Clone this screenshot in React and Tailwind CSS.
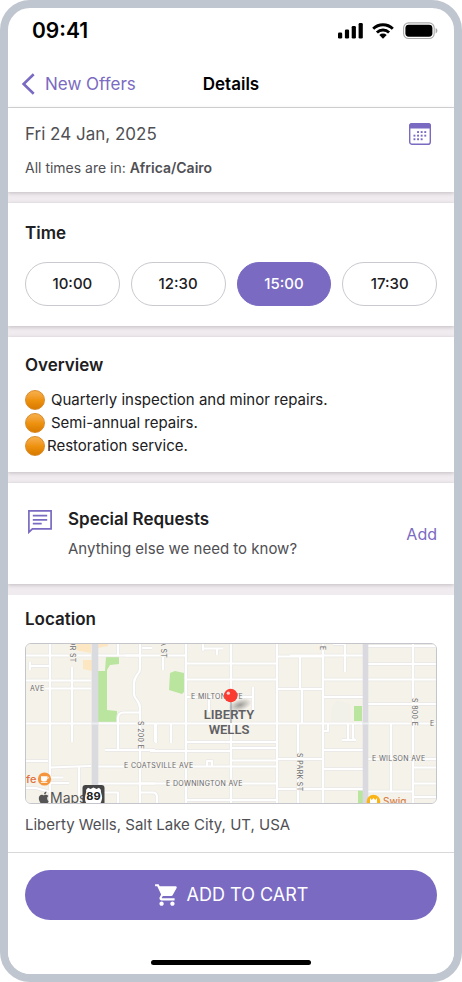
import React, { useState } from "react";
import { MdShoppingCart } from "react-icons/md";

const times = ["10:00", "12:30", "15:00", "17:30"];

const overview = [
  { text: "Quarterly inspection and minor repairs.", gap: true },
  { text: "Semi-annual repairs.", gap: true },
  { text: "Restoration service.", gap: false },
];

const StatusBar = () => {
  return (
    <div className="flex items-center justify-between h-[46px] px-4">
      <span className="pl-2 text-[21px] leading-6 font-semibold text-black">09:41</span>
      <div className="flex items-center gap-[9px]">
        <svg width="25" height="16" viewBox="0 0 25 16" aria-hidden="true">
          <rect x="0" y="9.5" width="4.2" height="6" rx="1.3" />
          <rect x="6.9" y="6.4" width="4.2" height="9.1" rx="1.3" />
          <rect x="13.7" y="3" width="4.2" height="12.5" rx="1.3" />
          <rect x="20.6" y="0" width="4.2" height="15.5" rx="1.3" />
        </svg>
        <svg width="22" height="16" viewBox="0 0 22 16" aria-hidden="true">
          <g fill="none" stroke="#000" strokeWidth="2.9">
            <path d="M1.2 5.7a14 14 0 0 1 19.6 0" />
            <path d="M4.9 9.5a8.8 8.8 0 0 1 12.2 0" />
          </g>
          <path d="M7.3 12a5.5 5.5 0 0 1 7.4 0L11 15.7Z" />
        </svg>
        <svg width="35" height="18" viewBox="0 0 35 18" aria-hidden="true">
          <rect x="0.6" y="0.9" width="30.6" height="15.6" rx="5" fill="none" stroke="#aaa" strokeWidth="1.1" />
          <rect x="2.4" y="2.7" width="27" height="12" rx="3.4" />
          <path d="M32.6 6v5.4c1.1-.5 1.8-1.5 1.8-2.7s-.7-2.2-1.8-2.7Z" fill="#aaa" />
        </svg>
      </div>
    </div>
  );
};

const CalendarIcon = () => {
  const dots = [
    [9, 9], [12.6, 9], [16.2, 9],
    [5.4, 12.6], [9, 12.6], [12.6, 12.6], [16.2, 12.6],
    [5.4, 16.2], [9, 16.2], [12.6, 16.2],
  ];
  return (
    <svg width="22" height="22" viewBox="0 0 22 22" aria-hidden="true">
      <rect x="0.7" y="0.7" width="20.6" height="20.6" rx="2.4" fill="none" stroke="#7a6ac2" strokeWidth="1.4" />
      <path d="M0 5.4V3a3 3 0 0 1 3-3h16a3 3 0 0 1 3 3v2.4Z" fill="#7a6ac2" />
      {dots.map(([x, y]) => (
        <rect key={`${x}-${y}`} x={x - 0.9} y={y - 0.9} width="1.9" height="1.9" fill="#7a6ac2" />
      ))}
    </svg>
  );
};

const ChatIcon = () => {
  return (
    <svg width="24" height="24" viewBox="0 0 24 24" fill="none" stroke="#7a6ac2" strokeWidth="1.7" aria-hidden="true">
      <path d="M0.9 22.2V0.9h22.2v17.9H4.4Z" />
      <path d="M4.8 5.6h14.4M4.8 9.8h14.4M4.8 13.6h8.9" />
    </svg>
  );
};

const roads = [
  // west side
  "M0 12.5H66M0 37.5H66M20 45.5H66M0 118H23M25 124.5L66 123M25 134.5H38M25 140H44M0 145H11L25 149",
  "M25 0V161M47 24V99M5 19V27M5 23H25M54 124V161",
  "M73 12.5H115M93 0V12M73 123.5H100M80 107H130M73 140.5H130",
  "M115 0V26Q115 29 112 32Q109 36 109 40V51Q109 54 112 57Q115 61 115 65V161",
  "M115 69.5H99Q93 69.5 93 75V107M130 80V99M117 5H127",
  // centre
  "M100 12.5H161M138 12V27M131 80V100M146 80V100M161 0V161M206 0V161M252 0V161",
  "M178 0V7V5.5H198M192 5V12M161 20.5H252M161 36.5H252M161 54H228M228 44V70M184 55V69",
  "M161 99H252M206 105H252M125 108H206M206 117.5H252M115 123.5H252M182 123V118H187V123",
  "M115 140.5H252M161 157H252M115 149.5H128Q132 150 132 154V161M73 149.5H93V161",
  "M252 13.5H298M252 46H298M252 116H298M252 146H338",
  // east side
  "M265 12.5H338M275 13V47M277 47V80M273 80V161M298 0V161M320 0V29M308 1H320",
  "M298 36.5H338M298 54H338M298 107H338M298 126H338M298 88H303V81",
  "M323 81V97M328 81V94Q328 97 331 97M317 97H330",
  "M343 3H412M343 21H412M343 36.5H412M343 61H412M343 116H412M388 124.5H412M388 140.5H412",
  "M366 81V149M343 148.5H388M388 0V161M388 154H412",
  "M0 80.5H412",
];

const streetLabels = [
  { text: "AVE", x: 5, y: 48 },
  { text: "E MILTON AVE", x: 166, y: 56 },
  { text: "E COATSVILLE AVE", x: 99, y: 125 },
  { text: "E DOWNINGTON AVE", x: 141, y: 143 },
  { text: "E WILSON AVE", x: 347, y: 118 },
  { text: "S 200 E", x: 113, y: 78, vertical: true },
  { text: "S 800 E", x: 387, y: 55, vertical: true },
  { text: "S PARK ST", x: 272, y: 110, vertical: true },
  { text: "OR ST", x: 45, y: -3, vertical: true },
  { text: "A ST", x: 136, y: -2, vertical: true },
  { text: "E", x: 295, y: 3, vertical: true },
  { text: "E", x: 405, y: 83 },
];

const LocationMap = () => {
  return (
    <svg
      className="block w-full h-[159px]"
      viewBox="1 1 410 159"
      preserveAspectRatio="xMidYMid slice"
      role="img"
      aria-label="Map of Liberty Wells"
    >
      <defs>
        <radialGradient id="pinShadow">
          <stop offset="0" stopColor="#555" stopOpacity="0.55" />
          <stop offset="1" stopColor="#555" stopOpacity="0" />
        </radialGradient>
      </defs>
      <rect width="412" height="161" fill="#f5f2ea" />
      <path d="M50 0H66V10L50 7ZM58 17H67V28L58 26ZM73 0H83V3L73 5Z" fill="#fce7c2" />
      <path d="M312 57L325 61V78H306V66Z" fill="#f1f1e9" />
      <path
        d="M73 28H80L81 14H94V21L85 22L82 27V67L92 68V79H73ZM145 30L150 28L159 30V49L157 51L144 47ZM329 63H337V78H329ZM333 147H338V161H333Z"
        fill="#b9e59e"
      />
      <g fill="none" stroke="#e9e8e7" strokeWidth="3.6" strokeLinejoin="round">
        {roads.map((d) => <path key={d} d={d} />)}
      </g>
      <g fill="none" stroke="#fff" strokeWidth="2.2" strokeLinejoin="round">
        {roads.map((d) => <path key={d} d={d} />)}
      </g>
      <path d="M70 0V161" stroke="#d9dbdf" strokeWidth="6.6" />
      <path d="M340.5 0V161" stroke="#d9d9df" strokeWidth="5.6" />
      <path d="M66 80.5H74M337 80.5H344" stroke="#eceef0" strokeWidth="2" />

      <g fontSize="7" fill="#69696b" stroke="#f7f5ef" strokeWidth="1.6" paintOrder="stroke" className="tracking-wider">
        {streetLabels.map(({ text, x, y, vertical }) => (
          <text key={`${text}-${x}`} transform={`translate(${x} ${y})${vertical ? " rotate(90)" : ""}`}>
            {text}
          </text>
        ))}
      </g>

      <path d="M206 58V80" stroke="#999" strokeWidth="1.2" />
      <g fontFamily="Roboto, sans-serif" fontSize="13" fontWeight="600" fill="#606064" textAnchor="middle">
        <text x="204" y="76">LIBERTY</text>
        <text x="204" y="91">WELLS</text>
      </g>
      <ellipse cx="215" cy="62" rx="12" ry="6" fill="url(#pinShadow)" transform="rotate(-18 215 62)" />
      <circle cx="205.7" cy="52.5" r="6.8" fill="#fb3b30" />
      <circle cx="203.3" cy="50.2" r="1.6" fill="#fff" fillOpacity="0.8" />

      <text x="1" y="140" fontSize="11" fontWeight="500" fill="#e2703c">fe</text>
      <circle cx="19.5" cy="136" r="6.6" fill="#f5953c" />
      <path d="M16 133.2h6v3.2a2 2 0 0 1-2 2h-2a2 2 0 0 1-2-2ZM15.8 139.2h6.6v.9h-6.6Z" fill="#fff" />
      <path d="M22 134h1.2q.8 1.4-1.2 2" fill="none" stroke="#fff" strokeWidth="0.8" />

      <circle cx="348.5" cy="158.6" r="6.8" fill="#fbb416" />
      <path d="M345 155l1.8 2 1.7-2 1.7 2 1.8-2v6h-7Z" fill="#fff" />
      <text x="358" y="162" fontSize="10" fontWeight="500" fill="#d9834a">Swig</text>

      <path
        d="M22.2 155.2c0-1.5 1.1-2.2 1.2-2.3-.9-1.2-2.2-1.2-2.5-1.2-1 0-1.7.6-2.2.6s-1.2-.6-2-.6c-1.4 0-2.9 1.2-2.9 3.5 0 2.6 1.9 5.8 3.3 5.800h4.200c1.200 0 2.200-2.300 2.400-3-.1 0-1.500-.7-1.500-2.800ZM20.700 150.700c.6-.7.8-1.500.7-2.200-1.100.1-2.300 1-2.300 2.700.6 0 1.200-.1 1.600-.5Z"
        fill="#555"
      />
      <text x="25" y="160" fontSize="14" fill="#555">Maps</text>
      <rect x="57.5" y="142" width="22" height="24" rx="3" fill="#454545" />
      <path d="M61 147l2-2.2 2.5 1.2 3-1.4 3 1.4 2.5-1.2 2 2.2c-.8 2 1.6 5 1 8.5s-2 5.5-2 5.5H62s-2-2-2-5.5 1.8-6 1-8.5Z" fill="#fff" />
      <text x="68.5" y="157" fontSize="11" fontWeight="700" fill="#222" textAnchor="middle">89</text>
    </svg>
  );
};

const App = () => {
  const [selectedTime, setSelectedTime] = useState("15:00");

  return (
    <div className="min-h-screen flex flex-col overflow-hidden rounded-[30px] border-8 border-[#bfc6cf] bg-white font-[Inter,sans-serif] text-[#202022]">
      <StatusBar />
      <header className="grid grid-cols-3 items-center h-[54px] px-[13px] pt-[6px] border-b border-[#d8d8da]">
        <button type="button" className="flex items-center gap-[10px] text-[17px] leading-6 text-[#7a6ac2] whitespace-nowrap">
          <svg width="14" height="22" viewBox="0 0 14 22" fill="none" stroke="#7a6ac2" strokeWidth="2.6" aria-hidden="true">
            <path d="M12.7 1.3L2.6 11l10.1 9.7" />
          </svg>
          New Offers
        </button>
        <h1 className="text-center text-[17px] leading-6 font-semibold text-black">Details</h1>
      </header>

      <main className="flex-1 flex flex-col gap-[11px] bg-[#f0ebee]">
        <section className="bg-white px-[17px] py-[14px] shadow-[0_1px_4px_rgba(0,0,0,0.2)]">
          <div className="flex items-center justify-between pr-[6px]">
            <p className="text-[17px] leading-6 text-[#505054]">Fri 24 Jan, 2025</p>
            <button type="button" aria-label="Choose date">
              <CalendarIcon />
            </button>
          </div>
          <p className="mt-3 text-[14px] leading-5 text-[#505054]">
            All times are in: <span className="font-semibold">Africa/Cairo</span>
          </p>
        </section>

        <section className="bg-white px-[17px] pt-[18px] pb-5 shadow-[0_1px_4px_rgba(0,0,0,0.2)]">
          <h2 className="text-[17px] leading-6 font-semibold">Time</h2>
          <div className="grid grid-cols-4 gap-[11px] mt-[17px]">
            {times.map((time) => (
              <button
                key={time}
                type="button"
                aria-pressed={time === selectedTime}
                onClick={() => setSelectedTime(time)}
                className={`h-11 rounded-full border text-[15px] leading-5 font-medium ${
                  time === selectedTime
                    ? "border-[#7a6ac2] bg-[#7a6ac2] text-white"
                    : "border-[#c9c9d0] bg-white"
                }`}
              >
                {time}
              </button>
            ))}
          </div>
        </section>

        <section className="bg-white px-[17px] pt-4 pb-[15px] shadow-[0_1px_4px_rgba(0,0,0,0.2)]">
          <h2 className="text-[17px] leading-6 font-semibold">Overview</h2>
          <ul className="mt-[11px]">
            {overview.map((item) => (
              <li
                key={item.text}
                className={`flex items-center text-[15px] leading-[23px] ${item.gap ? "gap-[6px]" : "gap-[2px]"}`}
              >
                <span className="size-5 rounded-full border border-[#d98a2a] bg-linear-to-b from-[#f7b04a] via-[#ee930f] to-[#d97a00]" />
                {item.text}
              </li>
            ))}
          </ul>
        </section>

        <section className="flex items-center bg-white px-[17px] pt-6 pb-[23px] shadow-[0_1px_4px_rgba(0,0,0,0.2)]">
          <div className="self-start pt-[3px] pl-[3px] pr-4">
            <ChatIcon />
          </div>
          <div className="flex-1">
            <h2 className="text-[17px] leading-6 font-semibold">Special Requests</h2>
            <p className="mt-[6px] text-[15px] leading-6 text-[#505054]">Anything else we need to know?</p>
          </div>
          <button type="button" className="text-[16px] leading-6 text-[#7a6ac2]">Add</button>
        </section>

        <section className="flex-1 bg-white px-[17px] pt-3 pb-[15px]">
          <h2 className="text-[17px] leading-6 font-semibold">Location</h2>
          <div className="mt-3 overflow-hidden rounded-md border border-[#c5c5cc]">
            <LocationMap />
          </div>
          <p className="mt-[9px] text-[15px] leading-6 text-[#505054]">Liberty Wells, Salt Lake City, UT, USA</p>
        </section>
      </main>

      <footer className="border-t border-[#d8d8da] bg-white px-[17px] pt-[17px] pb-[9px]">
        <button
          type="button"
          className="flex w-full h-[50px] items-center justify-center gap-[7px] rounded-full bg-[#7a6ac2] text-[18px] leading-6 text-white"
        >
          <MdShoppingCart className="size-[26px]" />
          ADD TO CART
        </button>
        <div className="mx-auto mt-10 h-[5px] w-40 rounded-full bg-black" />
      </footer>
    </div>
  );
};

export default App;
